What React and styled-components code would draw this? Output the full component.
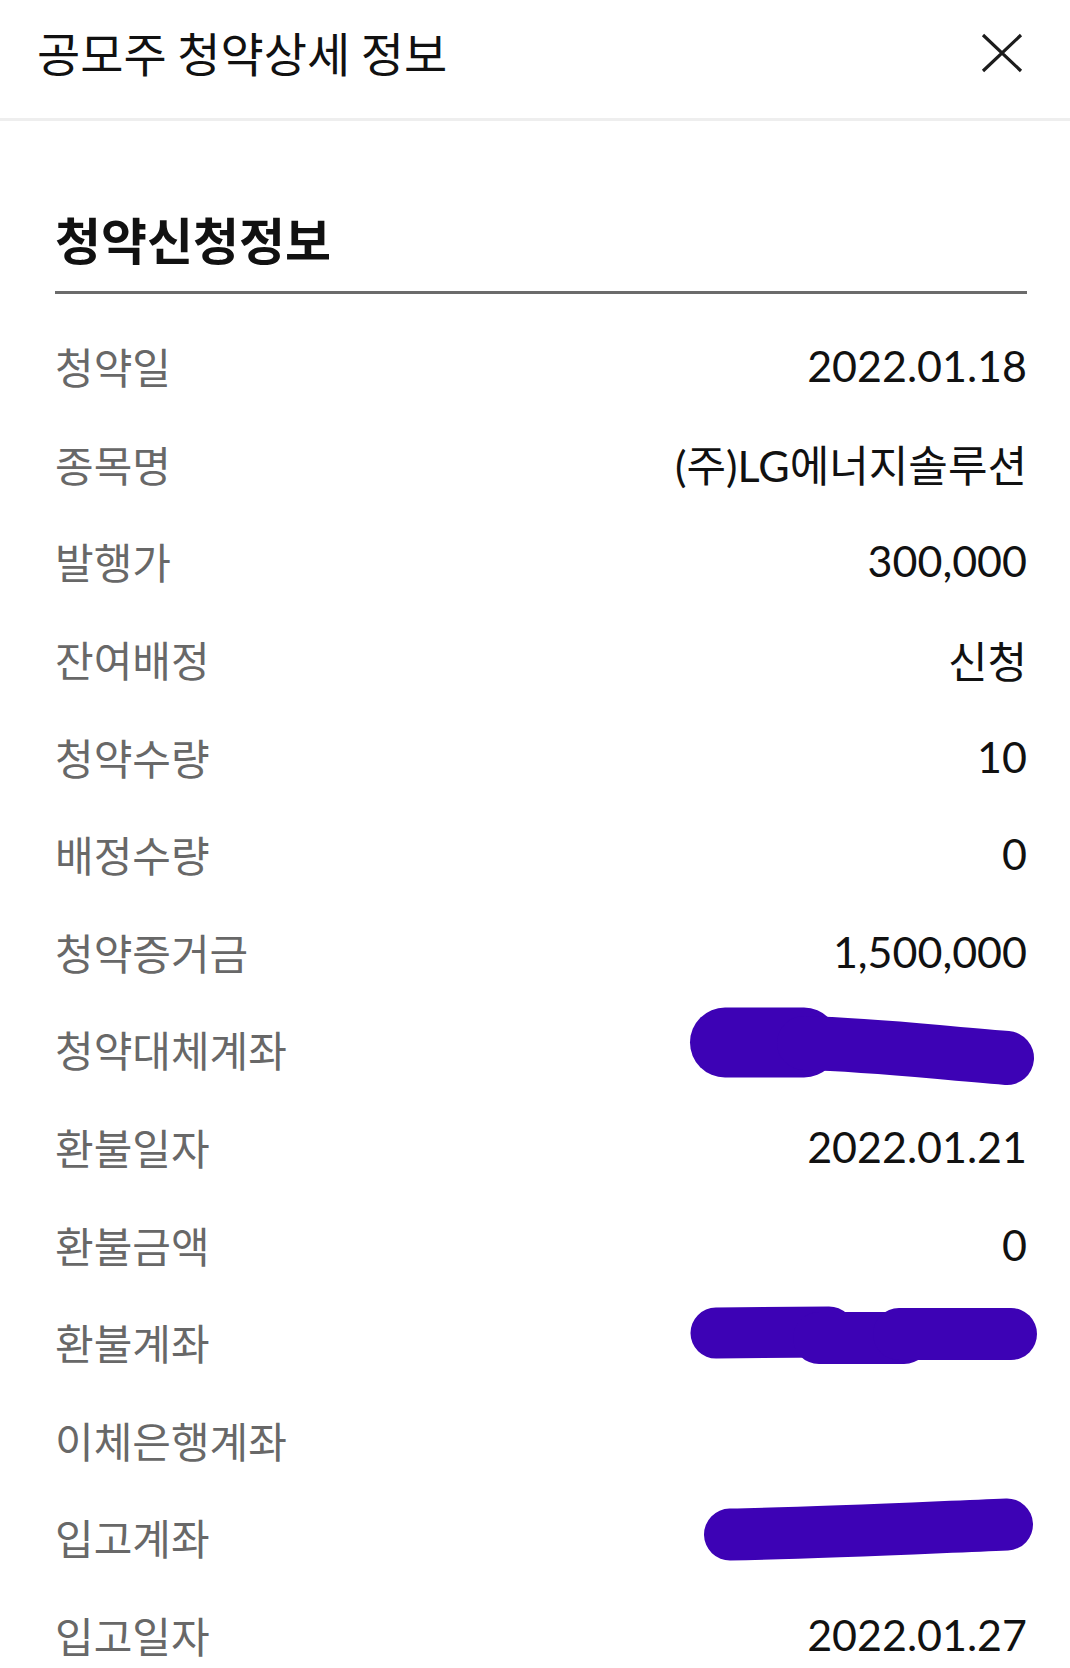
import React from "react";
import styled, { createGlobalStyle } from "styled-components";

const GlobalStyle = createGlobalStyle`
  body {
    margin: 0;
    background: #ffffff;
    font-family: Lato, "Noto Sans CJK KR", sans-serif;
  }
`;

const rows = [
  { label: "청약일", value: "2022.01.18" },
  { label: "종목명", value: "(주)LG에너지솔루션" },
  { label: "발행가", value: "300,000" },
  { label: "잔여배정", value: "신청" },
  { label: "청약수량", value: "10" },
  { label: "배정수량", value: "0" },
  { label: "청약증거금", value: "1,500,000" },
  { label: "청약대체계좌", value: "", scribble: "a" },
  { label: "환불일자", value: "2022.01.21" },
  { label: "환불금액", value: "0" },
  { label: "환불계좌", value: "", scribble: "b" },
  { label: "이체은행계좌", value: "" },
  { label: "입고계좌", value: "", scribble: "c" },
  { label: "입고일자", value: "2022.01.27" },
];

// hand-drawn redaction strokes, one set per hidden account
const scribbles = {
  a: [
    { d: "M36 42.5 L115 42.5", w: 70 },
    { d: "M115 43 C 190 45, 240 52, 318 58", w: 54 },
  ],
  b: [
    { d: "M27 40 L140 39", w: 51 },
    { d: "M130 45 L215 45", w: 52 },
    { d: "M210 41 L322 41", w: 52 },
  ],
  c: [{ d: "M41 46.5 C 130 45, 230 40, 318 36.5", w: 52 }],
};

const Scribble = ({ kind }) => (
  <Redaction viewBox="0 0 345 98" width="345" height="98">
    {scribbles[kind].map((s, i) => (
      <path
        key={i}
        d={s.d}
        stroke="#3d02b5"
        strokeWidth={s.w}
        strokeLinecap="round"
        strokeLinejoin="round"
        fill="none"
      />
    ))}
  </Redaction>
);

const CloseIcon = () => (
  <svg width="44" height="40" viewBox="0 0 44 40">
    <path d="M3 2 L41 38 M41 2 L3 38" stroke="#1c1c1c" strokeWidth="3.2" fill="none" />
  </svg>
);

const App = () => {
  return (
    <React.Fragment>
      <GlobalStyle />
      <Page>
        <Header>
          <HeaderTitle>공모주 청약상세 정보</HeaderTitle>
          <CloseButton>
            <CloseIcon />
          </CloseButton>
        </Header>
        <Section>
          <SectionTitle>청약신청정보</SectionTitle>
          <InfoList>
            {rows.map((r) => (
              <Row key={r.label}>
                <Label>{r.label}</Label>
                <Value>{r.value}</Value>
                {r.scribble && <Scribble kind={r.scribble} />}
              </Row>
            ))}
          </InfoList>
        </Section>
      </Page>
    </React.Fragment>
  );
};

export default App;

const Page = styled.div`
  width: 1070px;
  height: 1668px;
  overflow: hidden;
  background: #ffffff;
`;

const Header = styled.div`
  height: 121px;
  box-sizing: border-box;
  padding: 0 46px 13px 37px;
  display: flex;
  align-items: center;
  justify-content: space-between;
  border-bottom: 3px solid #eeeeee;
`;

const HeaderTitle = styled.h1`
  margin: 0;
  font-family: "Noto Sans CJK KR", sans-serif;
  font-size: 47px;
  font-weight: 400;
  color: #111111;
  line-height: 1.2;
`;

const CloseButton = styled.div`
  display: flex;
  align-items: center;
  justify-content: center;
`;

const Section = styled.div`
  padding: 0 43px 0 55px;
`;

const SectionTitle = styled.h2`
  margin: 88px 0 0;
  padding-bottom: 24px;
  font-family: "Noto Sans CJK KR", sans-serif;
  font-size: 50px;
  font-weight: 700;
  line-height: 58px;
  color: #111111;
  border-bottom: 3px solid #6b6b6b;
`;

const InfoList = styled.div`
  padding-top: 23px;
  display: flex;
  flex-direction: column;
`;

const Row = styled.div`
  position: relative;
  height: 97.6px;
  flex-shrink: 0;
  display: flex;
  align-items: center;
  justify-content: space-between;
`;

const Label = styled.span`
  font-family: "Noto Sans CJK KR", sans-serif;
  font-size: 42px;
  color: #686868;
`;

const Value = styled.span`
  font-family: Lato, "Noto Sans CJK KR", sans-serif;
  font-size: 43px;
  color: #111111;
`;

const Redaction = styled.svg`
  position: absolute;
  top: 0;
  right: -7px;
  overflow: visible;
`;
